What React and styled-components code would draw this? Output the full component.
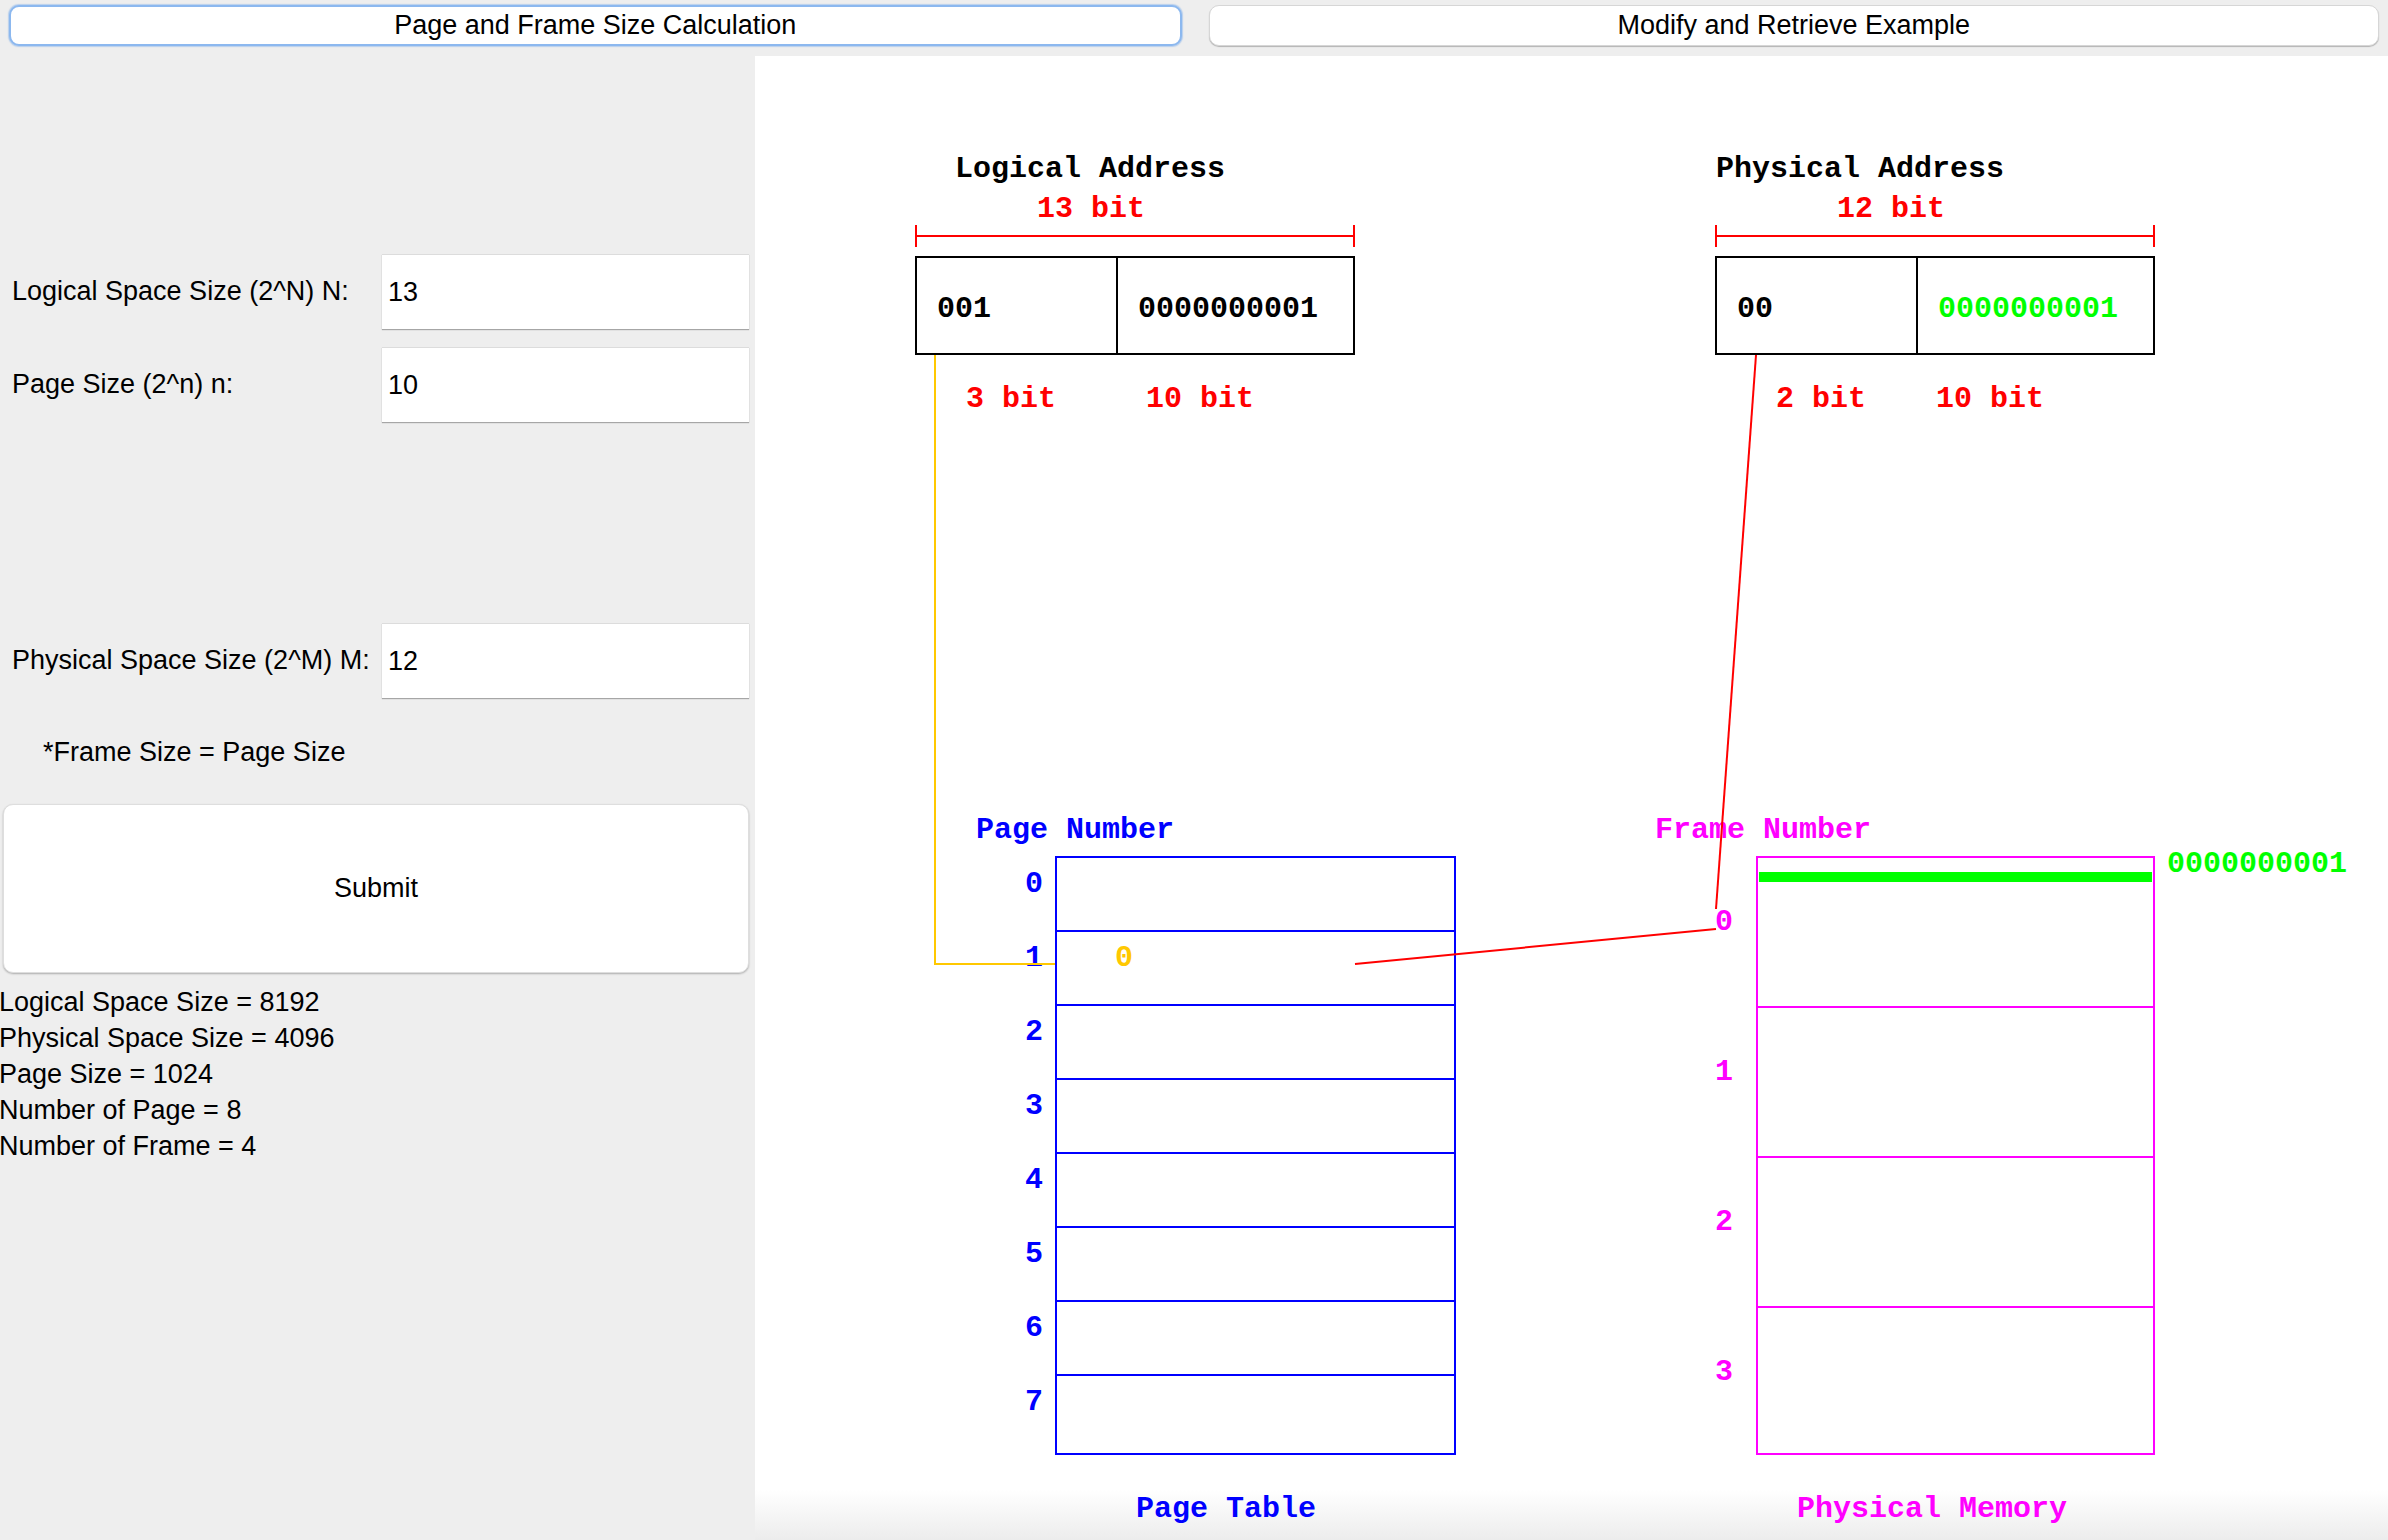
import React from "react";
import styled, { createGlobalStyle } from "styled-components";

const GlobalStyle = createGlobalStyle`
	* {
		box-sizing: border-box;
	}
	body {
		margin: 0;
		background: #eeeeee;
		font-family: "Liberation Sans", Arial, sans-serif;
		color: #000;
	}
`;

const pageRows = [0, 1, 2, 3, 4, 5, 6, 7];
const frameRows = [0, 1, 2, 3];

const App = () => {
	return (
		<>
			<GlobalStyle />
			<Window>
				<TabBar>
					<Tab $active>Page and Frame Size Calculation</Tab>
					<Tab>Modify and Retrieve Example</Tab>
				</TabBar>

				<Body>
					<SidePanel>
						<FormRow>
							<FieldLabel>Logical Space Size (2^N) N:</FieldLabel>
							<Field defaultValue='13' />
						</FormRow>
						<FormRow $gap={18}>
							<FieldLabel>Page Size (2^n) n:</FieldLabel>
							<Field defaultValue='10' />
						</FormRow>
						<FormRow $gap={201}>
							<FieldLabel>Physical Space Size (2^M) M:</FieldLabel>
							<Field defaultValue='12' />
						</FormRow>

						<Note>*Frame Size = Page Size</Note>

						<SubmitButton type='button'>Submit</SubmitButton>

						<ResultList>
							<div>Logical Space Size = 8192</div>
							<div>Physical Space Size = 4096</div>
							<div>Page Size = 1024</div>
							<div>Number of Page = 8</div>
							<div>Number of Frame = 4</div>
						</ResultList>
					</SidePanel>

					<Canvas>
						<AddressBlock $left={160}>
							<MonoText $indent={40}>Logical Address</MonoText>
							<MonoText $indent={122} $color='#ff0000' $gap={6}>
								13 bit
							</MonoText>
							<Bracket />
							<AddressBox>
								<AddressCell>001</AddressCell>
								<AddressCell $wide>0000000001</AddressCell>
							</AddressBox>
							<SubBits>
								<MonoText $indent={51} $color='#ff0000'>
									3 bit
								</MonoText>
								<MonoText $indent={231} $color='#ff0000' $abs>
									10 bit
								</MonoText>
							</SubBits>
						</AddressBlock>

						<AddressBlock $left={960}>
							<MonoText $indent={1}>Physical Address</MonoText>
							<MonoText $indent={122} $color='#ff0000' $gap={6}>
								12 bit
							</MonoText>
							<Bracket />
							<AddressBox>
								<AddressCell>00</AddressCell>
								<AddressCell $wide $color='#00ff00'>
									0000000001
								</AddressCell>
							</AddressBox>
							<SubBits>
								<MonoText $indent={61} $color='#ff0000'>
									2 bit
								</MonoText>
								<MonoText $indent={221} $color='#ff0000' $abs>
									10 bit
								</MonoText>
							</SubBits>
						</AddressBlock>

						<TableGroup $left={200}>
							<MonoText $indent={21} $color='#0000ff'>
								Page Number
							</MonoText>
							<TableBody>
								{pageRows.map((p, i) => (
									<PageRow key={i}>
										<RowLabel $color='#0000ff' $width={88}>
											{p}
										</RowLabel>
										<PageCell $last={i === pageRows.length - 1}>
											{p === 1 && <EntryValue>0</EntryValue>}
										</PageCell>
									</PageRow>
								))}
							</TableBody>
							<Caption $indent={181} $color='#0000ff'>
								Page Table
							</Caption>
						</TableGroup>

						<TableGroup $left={900}>
							<MonoText $indent={0} $color='#ff00ff'>
								Frame Number
							</MonoText>
							<TableBody>
								{frameRows.map((f, i) => (
									<FrameRow key={i}>
										<RowLabel $color='#ff00ff' $width={78} $top={49}>
											{f}
										</RowLabel>
										<FrameCell $last={i === frameRows.length - 1}>
											{f === 0 && <OffsetBar />}
										</FrameCell>
										{f === 0 && <OffsetValue>0000000001</OffsetValue>}
									</FrameRow>
								))}
							</TableBody>
							<Caption $indent={142} $color='#ff00ff'>
								Physical Memory
							</Caption>
						</TableGroup>

						<Wires width='1633' height='1484' viewBox='0 0 1633 1484'>
							<polyline
								points='180,299 180,908 300,908'
								fill='none'
								stroke='#ffc800'
								strokeWidth='2'
							/>
							<line x1='1001' y1='299' x2='961' y2='853' stroke='#ff0000' strokeWidth='2' />
							<line x1='961' y1='873' x2='600' y2='908' stroke='#ff0000' strokeWidth='2' />
						</Wires>
					</Canvas>
				</Body>
			</Window>
		</>
	);
};

export default App;

const Window = styled.div`
	width: 2388px;
	height: 1540px;
	display: flex;
	flex-direction: column;
	overflow: hidden;
	background: #eeeeee;
`;

const TabBar = styled.div`
	height: 56px;
	display: flex;
	gap: 27px;
	padding: 5px 9px 10px;
`;

const Tab = styled.div`
	flex: 1;
	height: 41px;
	display: flex;
	align-items: center;
	justify-content: center;
	background: #ffffff;
	border-radius: 10px;
	font-size: 27px;
	border: ${(p) => (p.$active ? "2px solid #8cb8ef" : "1px solid #d6d6d6")};
	box-shadow: ${(p) =>
		p.$active
			? "0 0 1px 1px rgba(120, 170, 235, 0.45)"
			: "0 1px 1px rgba(0, 0, 0, 0.25)"};
`;

const Body = styled.div`
	flex: 1;
	display: flex;
`;

const SidePanel = styled.div`
	width: 755px;
	flex-shrink: 0;
	display: flex;
	flex-direction: column;
	padding-top: 198px;
	font-size: 27px;
`;

const FormRow = styled.div`
	display: flex;
	align-items: center;
	margin-left: 12px;
	margin-top: ${(p) => p.$gap || 0}px;
	height: 75px;
`;

const FieldLabel = styled.div`
	width: 370px;
	white-space: nowrap;
`;

const Field = styled.input`
	width: 367px;
	height: 75px;
	border: none;
	border-top: 1px solid #dcdcdc;
	box-shadow: 0 1px 1px rgba(0, 0, 0, 0.3);
	background: #ffffff;
	padding: 0 6px;
	font-family: "Liberation Sans", Arial, sans-serif;
	font-size: 27px;
	color: #000;
	outline: none;
`;

const Note = styled.div`
	margin: 39px 0 0 43px;
	line-height: 30px;
`;

const SubmitButton = styled.button`
	margin: 37px 0 0 3px;
	width: 746px;
	height: 169px;
	background: #ffffff;
	border: 1px solid #dedede;
	border-radius: 10px;
	box-shadow: 0 1px 2px rgba(0, 0, 0, 0.28);
	font-family: "Liberation Sans", Arial, sans-serif;
	font-size: 27px;
	color: #000;
`;

const ResultList = styled.div`
	margin: 11px 0 0 -1px;
	line-height: 36px;
	white-space: nowrap;
`;

const Canvas = styled.div`
	position: relative;
	flex: 1;
	overflow: hidden;
	background: linear-gradient(
		to bottom,
		#ffffff 0,
		#ffffff calc(100% - 50px),
		#ececec 100%
	);
`;

const MonoText = styled.div`
	position: ${(p) => (p.$abs ? "absolute" : "static")};
	left: ${(p) => (p.$abs ? `${p.$indent}px` : "auto")};
	top: 0;
	padding-left: ${(p) => (p.$abs ? 0 : p.$indent || 0)}px;
	margin-top: ${(p) => p.$gap || 0}px;
	font-family: "Liberation Mono", "Courier New", monospace;
	font-weight: bold;
	font-size: 30px;
	line-height: 34px;
	white-space: nowrap;
	color: ${(p) => p.$color || "#000"};
`;

const AddressBlock = styled.div`
	position: absolute;
	left: ${(p) => p.$left}px;
	top: 96px;
	width: 440px;
	display: flex;
	flex-direction: column;
`;

const Bracket = styled.div`
	position: relative;
	margin-top: -1px;
	height: 22px;
	border-left: 2px solid #ff0000;
	border-right: 2px solid #ff0000;

	&::before {
		content: "";
		position: absolute;
		left: 0;
		right: 0;
		top: 10px;
		height: 2px;
		background: #ff0000;
	}
`;

const AddressBox = styled.div`
	margin-top: 9px;
	height: 99px;
	display: flex;
	border: 2px solid #000;
`;

const AddressCell = styled.div`
	width: ${(p) => (p.$wide ? "auto" : "199px")};
	flex: ${(p) => (p.$wide ? 1 : "none")};
	display: flex;
	align-items: center;
	padding: 6px 0 0 20px;
	border-left: ${(p) => (p.$wide ? "2px solid #000" : "none")};
	font-family: "Liberation Mono", "Courier New", monospace;
	font-weight: bold;
	font-size: 30px;
	color: ${(p) => p.$color || "#000"};
`;

const SubBits = styled.div`
	position: relative;
	margin-top: 27px;
`;

const TableGroup = styled.div`
	position: absolute;
	left: ${(p) => p.$left}px;
	top: 757px;
	display: flex;
	flex-direction: column;
`;

const TableBody = styled.div`
	margin-top: 9px;
	display: flex;
	flex-direction: column;
`;

const PageRow = styled.div`
	display: flex;
	gap: 12px;
`;

const FrameRow = styled.div`
	display: flex;
	gap: 23px;
`;

const RowLabel = styled.div`
	width: ${(p) => p.$width}px;
	padding-top: ${(p) => p.$top || 11}px;
	text-align: right;
	font-family: "Liberation Mono", "Courier New", monospace;
	font-weight: bold;
	font-size: 30px;
	line-height: 34px;
	color: ${(p) => p.$color};
`;

const PageCell = styled.div`
	width: 401px;
	height: ${(p) => (p.$last ? 81 : 74)}px;
	border: 2px solid #0000ff;
	border-bottom-width: ${(p) => (p.$last ? 2 : 0)}px;
`;

const EntryValue = styled.div`
	padding: 9px 0 0 58px;
	font-family: "Liberation Mono", "Courier New", monospace;
	font-weight: bold;
	font-size: 30px;
	line-height: 34px;
	color: #ffc800;
`;

const FrameCell = styled.div`
	width: 399px;
	height: ${(p) => (p.$last ? 149 : 150)}px;
	border: 2px solid #ff00ff;
	border-bottom-width: ${(p) => (p.$last ? 2 : 0)}px;
`;

const OffsetBar = styled.div`
	margin: 14px 1px 0;
	height: 10px;
	background: #00ff00;
`;

const OffsetValue = styled.div`
	margin: -9px 0 0 -11px;
	font-family: "Liberation Mono", "Courier New", monospace;
	font-weight: bold;
	font-size: 30px;
	line-height: 34px;
	color: #00ff00;
`;

const Caption = styled(MonoText)`
	margin-top: 37px;
`;

const Wires = styled.svg`
	position: absolute;
	left: 0;
	top: 0;
	pointer-events: none;
`;
